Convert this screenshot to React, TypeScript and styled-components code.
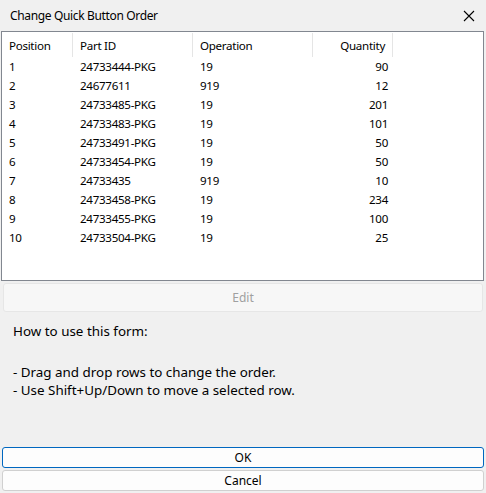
import React from "react";
import styled, { createGlobalStyle } from "styled-components";

const Global = createGlobalStyle`
  html, body { margin: 0; padding: 0; background: #f0f0f0; }
  body { font-family: "Noto Sans", "Open Sans", sans-serif; font-size: 12px; color: #000; }
`;

const Window = styled.div`
  width: 486px;
  height: 493px;
  box-sizing: border-box;
  background: #f0f0f0;
  display: flex;
  flex-direction: column;
  overflow: hidden;
`;

const TitleBar = styled.div`
  height: 31px;
  flex: none;
  display: flex;
  align-items: center;
  justify-content: space-between;
  padding: 0 8px 0 10px;
  font-size: 12px;
  letter-spacing: -0.35px;
`;

const CloseIcon = styled.svg`
  width: 12px;
  height: 12px;
  margin-right: 3px;
`;

const ListBox = styled.div`
  flex: none;
  height: 250px;
  margin: 0 2px 0 1px;
  border: 1px solid #828790;
  background: #fff;
  box-sizing: border-box;
  font-size: 11.6px;
  letter-spacing: -0.3px;
`;

const Grid = styled.div`
  display: grid;
  grid-template-columns: 71px 120px 120px 80px;
`;

const HeaderCell = styled.div<{ $right?: boolean }>`
  height: 24px;
  margin-top: 1px;
  display: flex;
  align-items: center;
  justify-content: ${(p) => (p.$right ? "flex-end" : "flex-start")};
  padding: ${(p) => (p.$right ? "0 7px 0 0" : "0 0 0 7px")};
  border-right: 1px solid #e5e5e5;
  box-sizing: border-box;
`;

const Cell = styled.div<{ $right?: boolean }>`
  height: 19px;
  display: flex;
  align-items: center;
  justify-content: ${(p) => (p.$right ? "flex-end" : "flex-start")};
  padding: ${(p) => (p.$right ? "0 5px 0 0" : "0 0 0 7px")};
  white-space: nowrap;
`;

const EditButton = styled.button`
  flex: none;
  height: 29px;
  margin: 2px 3px 0 3px;
  border: 1px solid #e6e6e6;
  border-radius: 3px;
  background: #f7f7f7;
  color: #a0a0a0;
  font-family: inherit;
  font-size: 12px;
`;

const Help = styled.div`
  padding: 10px 0 0 13px;
  font-size: 13.4px;
  line-height: 18px;
  flex: 1;
`;

const HelpLine = styled.div<{ $gap?: boolean }>`
  margin-top: ${(p) => (p.$gap ? "23px" : "0")};
`;

const DialogButton = styled.button<{ $primary?: boolean }>`
  flex: none;
  height: 21px;
  margin: 0 2px 2px 2px;
  border: 1px solid ${(p) => (p.$primary ? "#0067c0" : "#d0d0d0")};
  border-radius: 3px;
  background: #fdfdfd;
  color: #000;
  font-family: inherit;
  font-size: 12px;
  padding: 0;
`;

const rows = [
  ["1", "24733444-PKG", "19", "90"],
  ["2", "24677611", "919", "12"],
  ["3", "24733485-PKG", "19", "201"],
  ["4", "24733483-PKG", "19", "101"],
  ["5", "24733491-PKG", "19", "50"],
  ["6", "24733454-PKG", "19", "50"],
  ["7", "24733435", "919", "10"],
  ["8", "24733458-PKG", "19", "234"],
  ["9", "24733455-PKG", "19", "100"],
  ["10", "24733504-PKG", "19", "25"],
];

export default function App() {
  return (
    <>
      <Global />
      <Window>
        <TitleBar>
          <span>Change Quick Button Order</span>
          <CloseIcon viewBox="0 0 12 12">
            <path d="M1 1 L11 11 M11 1 L1 11" stroke="#000" strokeWidth="1.1" fill="none" />
          </CloseIcon>
        </TitleBar>
        <ListBox>
          <Grid>
            <HeaderCell>Position</HeaderCell>
            <HeaderCell>Part ID</HeaderCell>
            <HeaderCell>Operation</HeaderCell>
            <HeaderCell $right>Quantity</HeaderCell>
            {rows.map((r) => (
              <React.Fragment key={r[0]}>
                <Cell>{r[0]}</Cell>
                <Cell>{r[1]}</Cell>
                <Cell>{r[2]}</Cell>
                <Cell $right>{r[3]}</Cell>
              </React.Fragment>
            ))}
          </Grid>
        </ListBox>
        <EditButton disabled>Edit</EditButton>
        <Help>
          <HelpLine>How to use this form:</HelpLine>
          <HelpLine $gap>- Drag and drop rows to change the order.</HelpLine>
          <HelpLine>- Use Shift+Up/Down to move a selected row.</HelpLine>
        </Help>
        <DialogButton $primary>OK</DialogButton>
        <DialogButton>Cancel</DialogButton>
      </Window>
    </>
  );
}
